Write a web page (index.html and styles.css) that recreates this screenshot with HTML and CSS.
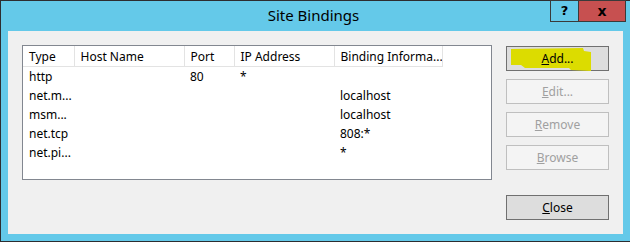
FILE: index.html
```html
<!DOCTYPE html>
<html lang="en">
<head>
    <meta charset="UTF-8">
    <title>Site Bindings</title>
    <link rel="stylesheet" href="styles.css">
</head>
<body>
    <div class="window">
        <div class="titlebar">
            <span></span>
            <span class="title">Site Bindings</span>
            <div class="caption">
                <button class="cap help">?</button>
                <button class="cap close">x</button>
            </div>
        </div>
        <div class="client">
            <div class="list">
                <table>
                    <colgroup>
                        <col class="c-type"><col class="c-host"><col class="c-port"><col class="c-ip"><col class="c-info"><col>
                    </colgroup>
                    <thead>
                        <tr>
                            <th>Type</th>
                            <th>Host Name</th>
                            <th>Port</th>
                            <th>IP Address</th>
                            <th>Binding Informa...</th>
                            <th class="rest"></th>
                        </tr>
                    </thead>
                    <tbody>
                        <tr><td>http</td><td></td><td>80</td><td>*</td><td></td><td></td></tr>
                        <tr><td>net.m...</td><td></td><td></td><td></td><td>localhost</td><td></td></tr>
                        <tr><td>msm...</td><td></td><td></td><td></td><td>localhost</td><td></td></tr>
                        <tr><td>net.tcp</td><td></td><td></td><td></td><td>808:*</td><td></td></tr>
                        <tr><td>net.pi...</td><td></td><td></td><td></td><td>*</td><td></td></tr>
                    </tbody>
                </table>
            </div>
            <div class="actions">
                <button class="btn marked"><span class="marker"></span><span class="label"><u>A</u>dd...</span></button>
                <button class="btn" disabled><u>E</u>dit...</button>
                <button class="btn" disabled><u>R</u>emove</button>
                <button class="btn" disabled><u>B</u>rowse</button>
                <button class="btn bottom"><u>C</u>lose</button>
            </div>
        </div>
    </div>
</body>
</html>
```

FILE: styles.css
```css
body {
    margin: 0;
    background: #ffffff;
    font-family: "Noto Sans", "Open Sans", sans-serif;
    font-size: 12px;
    color: #000000;
}
.window {
    width: 629px;
    height: 241px;
    background: #64c9e9;
    border-left: 1px solid #2d2d30;
    border-bottom: 1px solid #2d2d30;
    box-shadow: inset 0 1px #2d2d30;
}
.titlebar {
    height: 31px;
    display: grid;
    grid-template-columns: 1fr auto 1fr;
    padding-right: 4px;
}
.title {
    font-size: 15px;
    line-height: 31px;
    color: #000000;
}
.caption {
    justify-self: end;
    display: flex;
    align-items: flex-start;
}
.cap {
    height: 22px;
    border: 1px solid #3a3a3a;
    padding: 0;
    font-family: "DejaVu Sans", sans-serif;
    font-weight: bold;
    font-size: 13px;
    line-height: 18px;
    color: #000000;
}
.help {
    width: 29px;
    background: #64c9e9;
}
.close {
    width: 48px;
    margin-left: -1px;
    background: #c75050;
    font-size: 14px;
}
.client {
    margin-left: 7px;
    width: 615px;
    height: 203px;
    box-sizing: border-box;
    padding: 14px;
    background: #f0f0f0;
    display: flex;
    gap: 14px;
}
.list {
    width: 470px;
    height: 135px;
    box-sizing: border-box;
    border: 1px solid #828790;
    background: #ffffff;
}
table {
    border-collapse: collapse;
    table-layout: fixed;
    width: 468px;
}
.c-type { width: 51px; }
.c-host { width: 110px; }
.c-port { width: 50px; }
.c-ip { width: 100px; }
.c-info { width: 108px; }
th {
    height: 19px;
    padding: 1px 0 0 6px;
    font-weight: normal;
    text-align: left;
    white-space: nowrap;
    overflow: hidden;
    border-right: 1px solid #e3e3e3;
    border-bottom: 1px solid #e3e3e3;
}
th.rest {
    border: none;
}
td {
    height: 19px;
    padding: 0 0 0 6px;
    line-height: 19px;
    white-space: nowrap;
    overflow: hidden;
}
.actions {
    width: 103px;
    margin-top: 1px;
    display: flex;
    flex-direction: column;
    gap: 8px;
}
.btn {
    position: relative;
    height: 25px;
    padding: 0;
    border: 1px solid #707070;
    background: #dddddd;
    font-family: inherit;
    font-size: 12px;
    color: #000000;
}
.btn:disabled {
    border-color: #bfbfbf;
    background: #f4f4f4;
    color: #a0a0a0;
}
.btn.bottom {
    margin-top: auto;
}
/* highlighter stroke drawn over the Add button */
.marker {
    position: absolute;
    left: 4px;
    top: 1px;
    width: 80px;
    height: 23px;
    background: #dcdc00;
    clip-path: polygon(0 1px, 72px 0, 73px 3px, 80px 4px, 80px 23px, 60px 22px, 58px 20px, 14px 20px, 10px 17px, 0 17px);
}
.label {
    position: relative;
}
```
